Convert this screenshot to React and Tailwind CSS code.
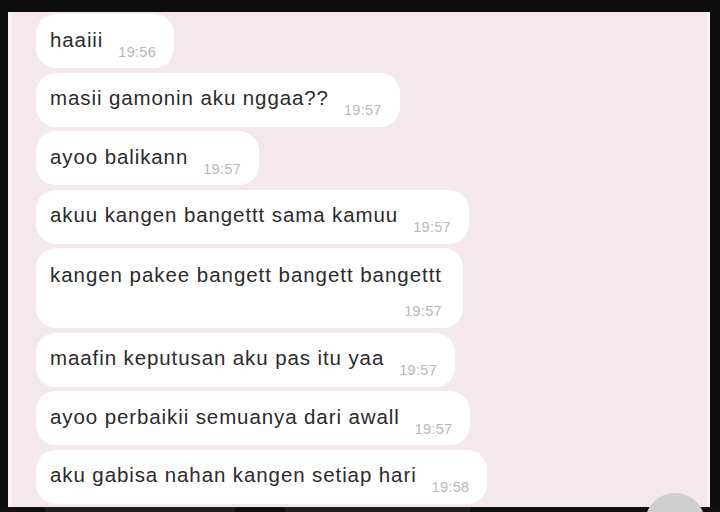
const messages = [
  { text: 'haaiii', time: '19:56' },
  { text: 'masii gamonin aku nggaa??', time: '19:57' },
  { text: 'ayoo balikann', time: '19:57' },
  { text: 'akuu kangen bangettt sama kamuu', time: '19:57' },
  { text: 'kangen pakee bangett bangett bangettt', time: '19:57', wrap: true },
  { text: 'maafin keputusan aku pas itu yaa', time: '19:57' },
  { text: 'ayoo perbaikii semuanya dari awall', time: '19:57' },
  { text: 'aku gabisa nahan kangen setiap hari', time: '19:58' },
];

function Bubble({ text, time, wrap }) {
  if (wrap) {
    return (
      <div className="self-start rounded-[20px] bg-white pl-[14px] pr-[21px] pt-[14px] pb-[9px] flex flex-col">
        <span className="text-[20.5px] tracking-[0.95px] leading-[26px] text-[#2b2b2b]">{text}</span>
        <span className="self-end mt-[15px] text-[14.5px] tracking-[0.3px] leading-[16px] text-[#b9b9b9]">{time}</span>
      </div>
    );
  }
  return (
    <div className="self-start h-[54px] rounded-[20px] bg-white pl-[14px] pr-[18px] flex items-center">
      <span className="text-[20.5px] tracking-[0.9px] leading-[26px] text-[#2b2b2b] -mt-[3px]">{text}</span>
      <span className="ml-[15px] mt-[21px] text-[14.5px] tracking-[0.3px] leading-[16px] text-[#b9b9b9]">{time}</span>
    </div>
  );
}

export default function App() {
  return (
    <div className="relative w-[720px] h-[512px] bg-[#0d0d0d] overflow-hidden" style={{ fontFamily: '"Liberation Sans", Arial, sans-serif' }}>
      <div className="ml-[8px] mt-[12px] w-[702px] h-[495px] bg-[#f5e8ec] border-l-[4px] border-[#f7f1f3] border-r-[3px] border-r-[#f8f4f5]">
        <div className="flex flex-col gap-[4.5px] pl-[24px] pt-[2px]">
          {messages.map((m, i) => (
            <Bubble key={i} {...m} />
          ))}
        </div>
      </div>

      {/* bottom bar */}
      <div className="absolute left-0 right-0 bottom-0 h-[5px] bg-[#111] flex gap-[50px] pl-[45px]">
        <div className="w-[190px] h-[5px] bg-[#1e1e1e]" />
        <div className="w-[185px] h-[5px] bg-[#1e1e1e]" />
      </div>
      <div className="absolute left-[645px] top-[493px] w-[60px] h-[60px] rounded-full bg-[#cfcfcf]" />
    </div>
  );
}
